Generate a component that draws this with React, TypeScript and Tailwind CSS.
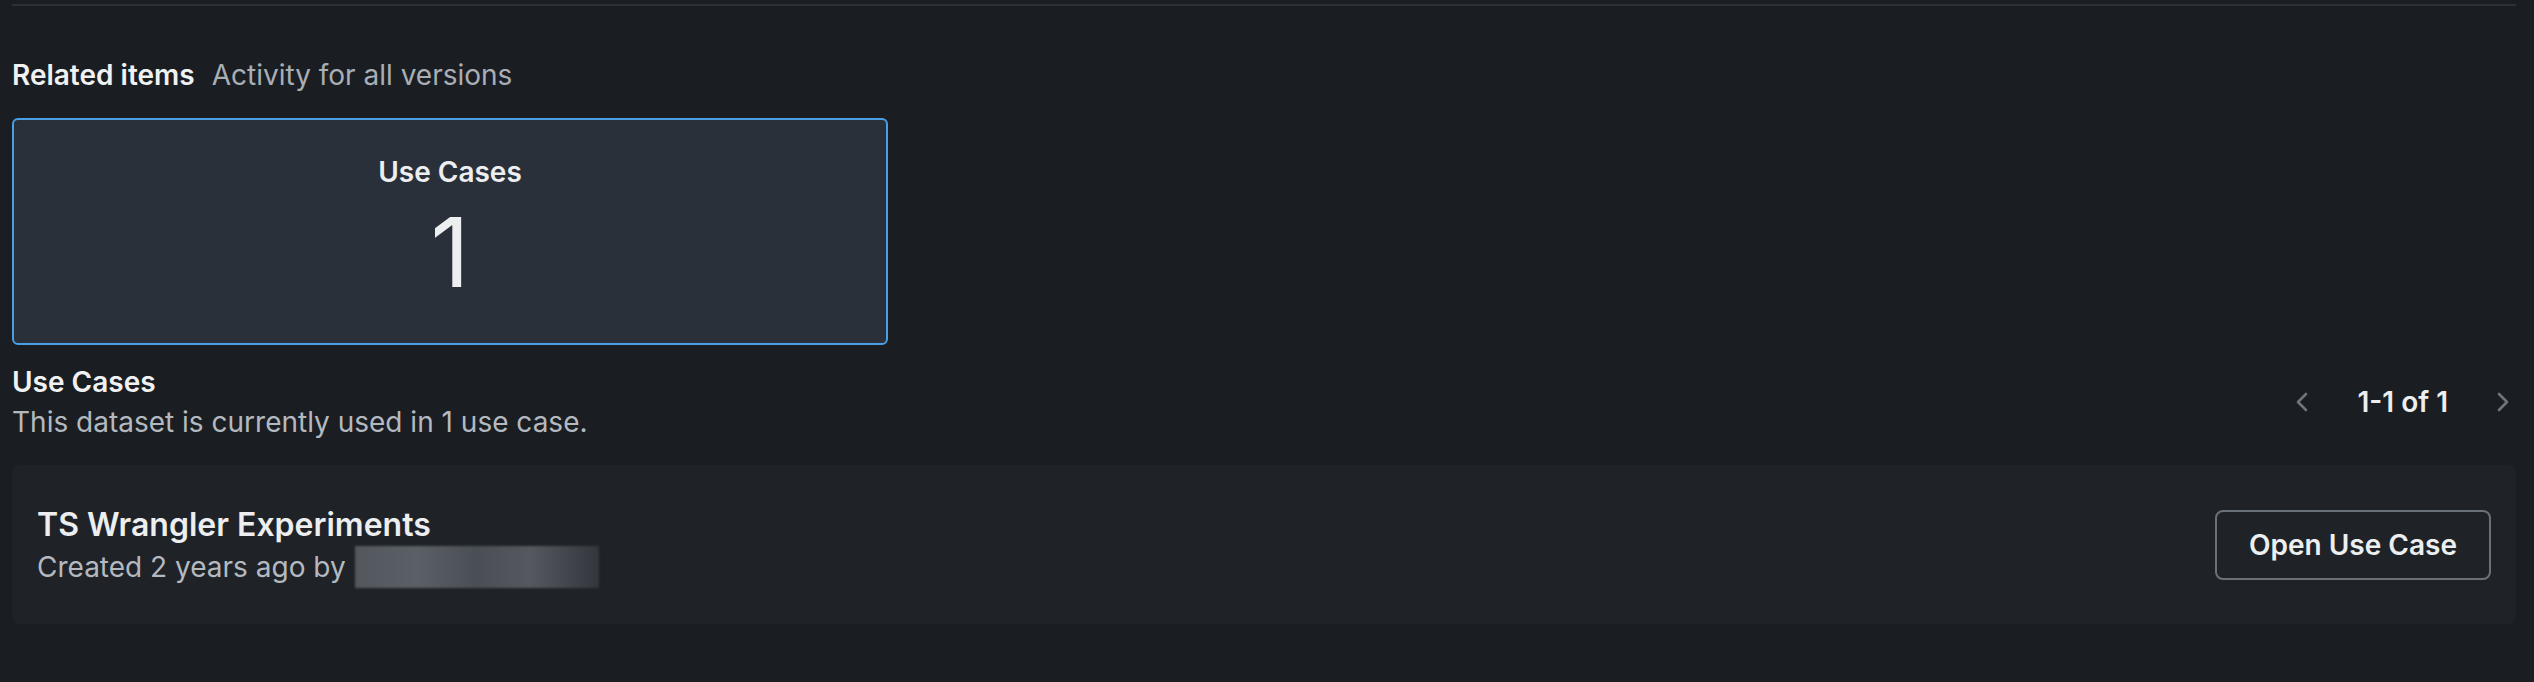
import React from "react";

const ChevronLeft = () => (
  <svg width="14" height="20" viewBox="0 0 14 20" fill="none">
    <polyline points="11,2 3,10 11,18" stroke="#6f747c" strokeWidth="2.6" strokeLinecap="round" strokeLinejoin="round" />
  </svg>
);

const ChevronRight = () => (
  <svg width="14" height="20" viewBox="0 0 14 20" fill="none">
    <polyline points="3,2 11,10 3,18" stroke="#6f747c" strokeWidth="2.6" strokeLinecap="round" strokeLinejoin="round" />
  </svg>
);

const App = () => {
  return (
    <div className="min-h-[682px] bg-[#1a1e22] px-[12px] font-['Inter','Liberation_Sans',sans-serif] text-[#eceef0] overflow-hidden">
      <div className="pt-[4px] pr-[6px]">
        <div className="h-[2px] bg-[#2c3137]"></div>
      </div>

      {/* header */}
      <div className="mt-[50px] flex items-baseline gap-[17px] text-[28px] leading-[38px]">
        <span className="font-semibold text-[#f0f1f3]">Related items</span>
        <span className="text-[#a9aeb6]">Activity for all versions</span>
      </div>

      {/* tile */}
      <div className="mt-[24px] w-[876px] h-[227px] rounded-[6px] border-2 border-[#4a9ee3] bg-[#29303a] flex flex-col items-center pt-[34px]">
        <div className="text-[28px] leading-[36px] font-semibold text-[#eceef0]">Use Cases</div>
        <div className="mt-[14px] text-[96px] leading-[96px] font-normal text-[#eceef0]">1</div>
      </div>

      {/* section head */}
      <div className="mt-[18px] flex items-center justify-between">
        <div>
          <div className="text-[28px] leading-[38px] font-semibold text-[#f0f1f3]">Use Cases</div>
          <div className="mt-[2px] text-[28px] leading-[38px] text-[#b4b9c0]">
            This dataset is currently used in 1 use case.
          </div>
        </div>
        <div className="flex items-center gap-[48px] mr-[12px]">
          <ChevronLeft />
          <span className="text-[28px] font-semibold text-[#eceef0]">1-1 of 1</span>
          <ChevronRight />
        </div>
      </div>

      {/* list */}
      <div className="mt-[24px] mr-[6px] h-[159px] rounded-[8px] bg-[#1f2328] flex items-center justify-between px-[25px]">
        <div className="pt-[4px]">
          <div className="text-[32px] leading-[38px] font-semibold text-[#eceef0]">TS Wrangler Experiments</div>
          <div className="mt-[2px] flex items-center gap-[9px] text-[28px] leading-[38px] text-[#b4b9c0]">
            <span>Created 2 years ago by</span>
            <div className="h-[42px] w-[244px] bg-[linear-gradient(90deg,#53585e,#5b6066_25%,#4a4f55_50%,#55595f_72%,#33373d)] blur-[1px]"></div>
          </div>
        </div>
        <button className="w-[276px] h-[70px] rounded-[8px] border-2 border-[#6b7178] text-[28px] font-semibold text-[#eceef0]">
          Open Use Case
        </button>
      </div>
    </div>
  );
};

export default App;
